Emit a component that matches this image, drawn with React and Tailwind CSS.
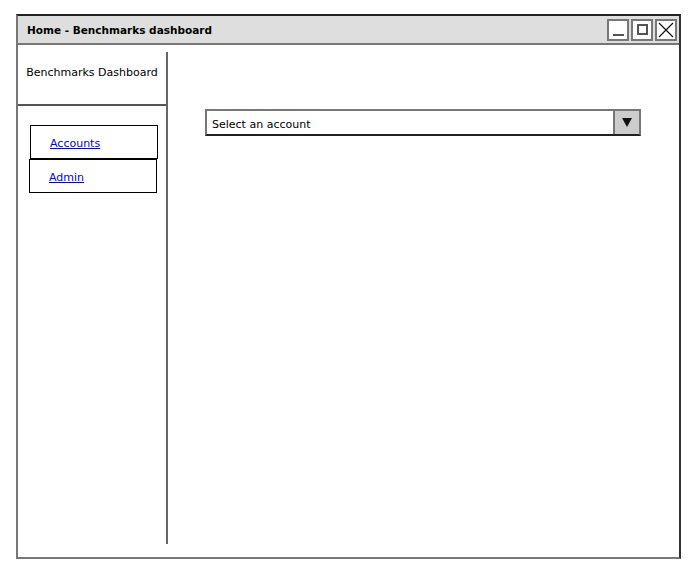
import React from 'react';

const font = { fontFamily: '"DejaVu Sans", "Liberation Sans", sans-serif' };

const WinButton = ({ children }) => (
  <div className="w-[22px] h-[22px] border-2 border-[#777] bg-white flex items-center justify-center">
    {children}
  </div>
);

const NavItem = ({ label, className }) => (
  <div className={`h-[34px] border border-black flex items-center pl-[19px] pt-[5px] ${className}`}>
    <a href="#" className="text-[11px] text-[#0000ff] underline">{label}</a>
  </div>
);

export default function App() {
  return (
    <div className="w-[690px] h-[573px] bg-white pl-[16px] pt-[14px]" style={font}>
      <div className="w-[665px] h-[545px] flex flex-col border-2 border-[#777] border-t-[#222] border-r-[#333]">
        <div className="h-[29px] bg-[#dedede] border-b-2 border-[#777] flex items-center justify-between pl-[9px] pr-[2px]">
          <span className="text-[10.5px] font-bold text-black pt-[3px]">Home - Benchmarks dashboard</span>
          <div className="flex gap-[2px]">
            <WinButton>
              <div className="w-[11px] h-[2px] bg-[#555] mt-[10px]" />
            </WinButton>
            <WinButton>
              <div className="w-[11px] h-[11px] border-2 border-[#555]" />
            </WinButton>
            <WinButton>
              <svg width="16" height="16" viewBox="0 0 16 16">
                <path d="M1 1 L15 15 M15 1 L1 15" stroke="#111" strokeWidth="1.2" />
              </svg>
            </WinButton>
          </div>
        </div>
        <div className="flex-1 flex">
          <div className="w-[148px] flex flex-col">
            <div className="h-[61px] flex items-center justify-center pb-[2px] border-b-2 border-[#555]">
              <span className="text-[11px] text-black">Benchmarks Dashboard</span>
            </div>
            <div className="pt-[19px] pl-[12px] pr-[8px] flex flex-col">
              <NavItem label="Accounts" className="" />
              <NavItem label="Admin" className="-ml-[1px] mr-[1px]" />
            </div>
          </div>
          <div className="w-[2px] bg-[#666] mt-[7px] mb-[13px]" />
          <div className="flex-1 pl-[37px] pt-[64px]">
            <div className="w-[436px] h-[27px] border-2 border-[#777] border-b-[#222] flex">
              <div className="flex-1 flex items-center pl-[5px] pt-[5px] text-[11px] text-black">Select an account</div>
              <div className="w-[26px] bg-[#cccccc] border-l-2 border-[#777] flex items-center justify-center">
                <svg width="10" height="9" viewBox="0 0 10 9">
                  <path d="M0 0 L10 0 L5 9 Z" fill="#111" />
                </svg>
              </div>
            </div>
          </div>
        </div>
      </div>
    </div>
  );
}
